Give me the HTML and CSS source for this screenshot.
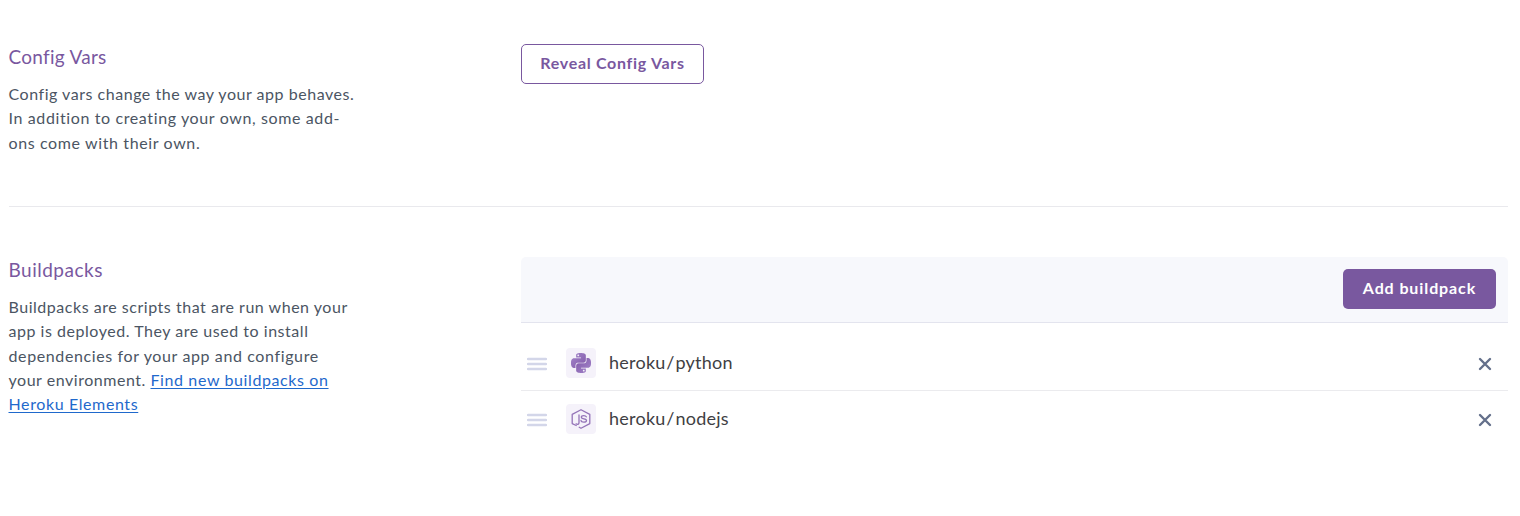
FILE: index.html
```html
<!DOCTYPE html>
<html lang="en">
<head>
<meta charset="utf-8">
<title>App settings</title>
<link rel="stylesheet" href="styles.css">
</head>
<body>
<main class="settings">
  <section class="section section-config">
    <div class="intro">
      <h2 class="title">Config Vars</h2>
      <p class="text">Config vars change the way your app behaves.<br><span class="loose">In addition to creating your own, some add-</span><br><span class="loose">ons come with their own.</span></p>
    </div>
    <div class="content"><button class="btn btn-outline">Reveal Config Vars</button></div>
  </section>
  <section class="section section-packs">
    <div class="intro">
      <h2 class="title title-packs">Buildpacks</h2>
      <p class="text">Buildpacks are scripts that are run when your<br>app is deployed. They are used to install<br><span class="loose">dependencies for your app and configure</span><br>your environment. <a class="link" href="#">Find new buildpacks on<br>Heroku Elements</a></p>
    </div>
    <div class="content">
      <div class="toolbar"><button class="btn btn-solid">Add buildpack</button></div>
      <ul class="packs">
        <li class="pack">
          <svg class="grip" viewBox="0 0 20 14"><path d="M1 2h18M1 7h18M1 12h18"/></svg>
          <span class="tile">
            <svg width="20" height="20" viewBox="0 0 24 24">
              <defs>
                <linearGradient id="purple" x1="0" y1="0" x2="1" y2="1"><stop offset="0" stop-color="#a587cb"/><stop offset="1" stop-color="#8058a8"/></linearGradient>
                <path id="snake" d="M14.25.18l.9.2.73.26.59.3.45.32.34.34.25.34.16.33.1.3.04.26.02.2-.01.13V8.5l-.05.63-.13.55-.21.46-.26.38-.3.31-.33.25-.35.19-.35.14-.33.1-.3.07-.26.04-.21.02H8.77l-.69.05-.59.14-.5.22-.41.27-.33.32-.27.35-.2.36-.15.37-.1.35-.07.32-.04.27-.02.21v3.06H3.17l-.21-.03-.28-.07-.32-.12-.35-.18-.36-.26-.36-.36-.35-.46-.32-.59-.28-.73-.21-.88-.14-1.05-.05-1.23.06-1.22.16-1.04.24-.87.32-.71.36-.57.4-.44.42-.33.42-.24.4-.16.36-.1.32-.05.24-.01h.16l.06.01h8.16v-.83H6.18l-.01-2.75-.02-.37.05-.34.11-.31.17-.28.25-.26.31-.23.38-.2.44-.18.51-.15.58-.12.64-.1.71-.06.77-.04.84-.02 1.27.05zm-6.3 1.98l-.23.33-.08.41.08.41.23.34.33.22.41.09.41-.09.33-.22.23-.34.08-.41-.08-.41-.23-.33-.33-.22-.41-.09-.41.09z"/>
              </defs>
              <g fill="url(#purple)"><use href="#snake"/><use href="#snake" transform="rotate(180 12 12)"/></g>
            </svg>
          </span>
          <span class="name">heroku<span class="slash">/</span>python</span>
          <svg class="remove" viewBox="0 0 14 14"><path d="M2 2l10 10M12 2L2 12"/></svg>
        </li>
        <li class="pack">
          <svg class="grip" viewBox="0 0 20 14"><path d="M1 2h18M1 7h18M1 12h18"/></svg>
          <span class="tile">
            <svg class="node" width="20" height="20" viewBox="0 0 20 20">
              <path d="M5.200 16.500 1.200 14.600V5.400L10 .7l8.800 4.700v9.200L10 19.300l-1.800-1"/>
              <path d="M8 6v7.400c0 1.700-1 2.400-2.900 1.500"/>
              <path d="M15.300 7.800c-.5-1-1.400-1.200-2.500-1.200-1.600 0-2.500.6-2.500 1.600 0 2.300 5.200.9 5.200 3.300 0 1.200-1.100 1.700-2.700 1.700-1.500 0-2.600-.5-2.800-1.700"/>
            </svg>
          </span>
          <span class="name">heroku<span class="slash">/</span>nodejs</span>
          <svg class="remove" viewBox="0 0 14 14"><path d="M2 2l10 10M12 2L2 12"/></svg>
        </li>
      </ul>
    </div>
  </section>
</main>
</body>
</html>
```

FILE: styles.css
```css
* { box-sizing: border-box; }
body { margin: 0; background: #fff; font-family: Lato, "Open Sans", sans-serif; color: #3f3f44; }
.settings { padding: 0 12px 0 8.500px; }
.section { display: grid; grid-template-columns: 512.500px 1fr; }
.section-config { height: 207px; padding-top: 44px; border-bottom: 1px solid #e9e9ed; }
.section-packs { padding-top: 50px; }
.title { margin: 0 0 12px; font-size: 19px; line-height: 26px; font-weight: 400; letter-spacing: .28px; color: #79589f; }
.title-packs { letter-spacing: .5px; }
.text { margin: 0; font-size: 16px; line-height: 24.300px; letter-spacing: .53px; white-space: nowrap; color: #4b5563; }
.loose { letter-spacing: .62px; }
.link { letter-spacing: .61px; color: #1f69cc; text-decoration: underline; text-underline-offset: 2px; text-decoration-thickness: 1px; }
.btn { height: 40px; padding: 0 0 2px; border-radius: 5px; font: 700 16px/38px Lato, "Open Sans", sans-serif; letter-spacing: .7px; white-space: nowrap; }
.btn-outline { width: 183px; background: #fff; border: 1px solid #79589f; color: #79589f; line-height: 36px; }
.btn-solid { width: 153px; background: #79589f; border: 0; color: #fff; letter-spacing: .9px; }
.toolbar { display: flex; justify-content: flex-end; height: 66px; padding: 12px; background: #f7f8fc; border-bottom: 1px solid #e3e4ee; border-radius: 5px 5px 0 0; }
.packs { margin: 0; padding: 12px 0 0; list-style: none; }
.pack { display: flex; align-items: center; height: 56px; padding: 0 16px 0 6px; border-bottom: 1px solid #ebebee; }
.pack:last-child { border-bottom: 0; }
.grip { width: 20px; height: 14px; margin: 2px 19px 0 0; fill: none; stroke: #d3d6e9; stroke-width: 2.300; stroke-linecap: round; }
.tile { display: flex; align-items: center; justify-content: center; width: 30px; height: 30px; padding-right: 1px; margin-right: 13px; border-radius: 4px; background: #f5f2fa; }
.node { fill: none; stroke: #9474b8; stroke-width: 1.300; stroke-linejoin: round; stroke-linecap: round; }
.name { flex: 1; padding-bottom: 2px; font-size: 18px; line-height: 26px; letter-spacing: .25px; }
.slash { margin: 0 .7px; }
.remove { width: 14px; height: 14px; margin-top: 2px; fill: none; stroke: #64708b; stroke-width: 2.400; stroke-linecap: round; }
```
